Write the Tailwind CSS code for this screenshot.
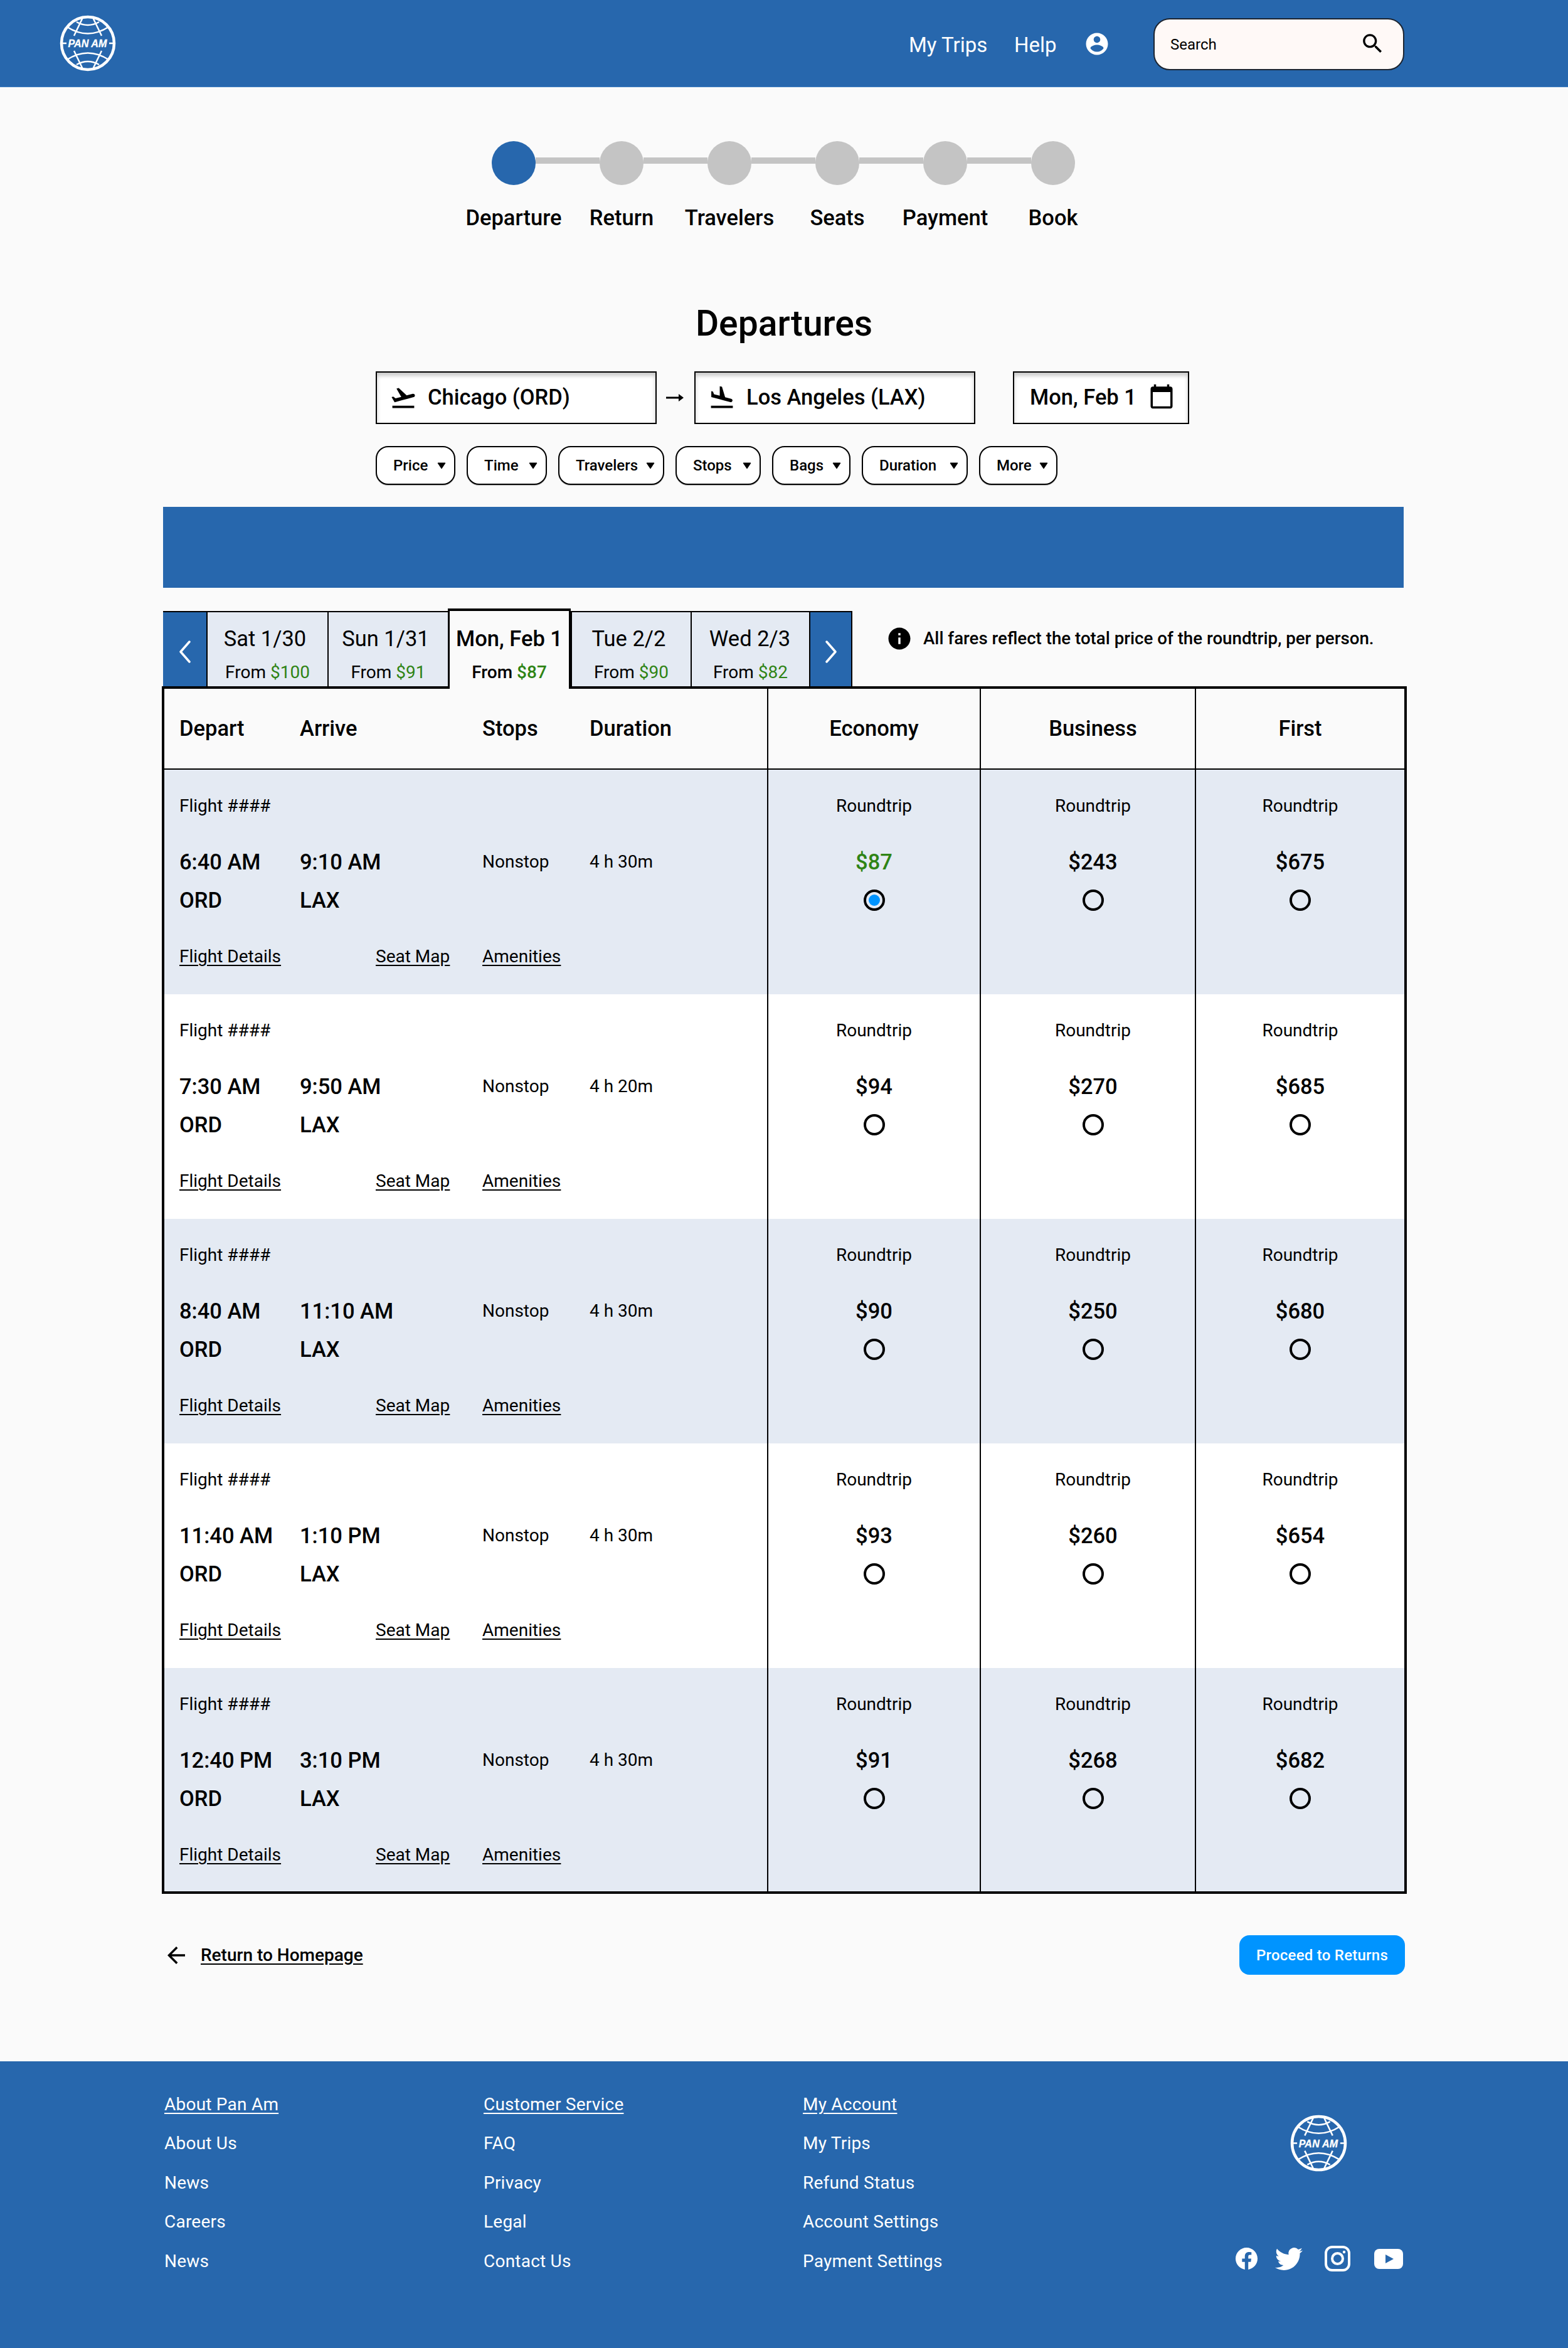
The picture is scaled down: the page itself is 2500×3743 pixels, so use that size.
<!DOCTYPE html>
<html lang="en">
<head>
    <meta charset="UTF-8">
    <title>Pan Am - Departures</title>
    <script src="https://cdn.jsdelivr.net/npm/@tailwindcss/browser@4"></script>
</head>
<body class="bg-[#fafafa] text-black [font-family:Roboto,sans-serif]">
    <!-- header -->
    <header class="h-[139px] bg-[#2767ad] border-b border-[#3f7fc4] flex items-center pl-[95px] pr-[261px] text-white">
        <svg class="logo w-[90px] h-[90px]" viewBox="0 0 90 90"></svg>
        <nav class="ml-auto flex items-center text-[33px]">
            <a class="w-[168px] pt-[6px]">My Trips</a>
            <a class="w-[111px] pt-[6px]">Help</a>
            <svg class="w-[42px] h-[42px] mt-[2px]" viewBox="0 0 24 24" fill="currentColor"><path d="M12 2C6.48 2 2 6.48 2 12s4.48 10 10 10 10-4.48 10-10S17.52 2 12 2zm0 3c1.66 0 3 1.34 3 3s-1.34 3-3 3-3-1.34-3-3 1.34-3 3-3zm0 14.2c-2.5 0-4.71-1.28-6-3.22.03-1.99 4-3.08 6-3.08 1.99 0 5.97 1.09 6 3.08-1.29 1.94-3.5 3.22-6 3.22z"/></svg>
        </nav>
        <div class="ml-[69px] mt-[2px] w-[400px] h-[83px] rounded-[26px] bg-[#fff9f7] border-2 border-[#1c2430] flex items-center pl-[25px] pr-[28px] text-black">
            <span class="text-[24px] mt-[1px]">Search</span>
            <svg class="ml-auto w-[41px] h-[41px] -mt-[2px]" viewBox="0 0 24 24" fill="currentColor"><path d="M15.5 14h-.79l-.28-.27C15.41 12.59 16 11.11 16 9.5 16 5.91 13.09 3 9.5 3S3 5.91 3 9.5 5.91 16 9.5 16c1.61 0 3.09-.59 4.23-1.57l.27.28v.79l5 4.99L20.49 19l-4.99-5zm-6 0C7.01 14 5 11.99 5 9.5S7.01 5 9.5 5 14 7.01 14 9.5 11.99 14 9.5 14z"/></svg>
        </div>
    </header>

    <main class="px-[260px]">
        <!-- stepper -->
        <div class="pt-[86px] flex flex-col items-center">
            <div class="flex items-start -ml-[2px]">
                <div class="w-[70px] h-[70px] rounded-full bg-[#2767ad]"></div>
                <div class="w-[102px] h-[10px] mt-[26px] bg-[#c4c4c4]"></div>
                <div class="w-[70px] h-[70px] rounded-full bg-[#c4c4c4]"></div>
                <div class="w-[102px] h-[10px] mt-[26px] bg-[#c4c4c4]"></div>
                <div class="w-[70px] h-[70px] rounded-full bg-[#c4c4c4]"></div>
                <div class="w-[102px] h-[10px] mt-[26px] bg-[#c4c4c4]"></div>
                <div class="w-[70px] h-[70px] rounded-full bg-[#c4c4c4]"></div>
                <div class="w-[102px] h-[10px] mt-[26px] bg-[#c4c4c4]"></div>
                <div class="w-[70px] h-[70px] rounded-full bg-[#c4c4c4]"></div>
                <div class="w-[102px] h-[10px] mt-[26px] bg-[#c4c4c4]"></div>
                <div class="w-[70px] h-[70px] rounded-full bg-[#c4c4c4]"></div>
            </div>
            <div class="mt-[32px] -ml-[2px] flex text-[34.5px] leading-[40px] font-medium text-center">
                <span class="w-[172px]">Departure</span>
                <span class="w-[172px]">Return</span>
                <span class="w-[172px]">Travelers</span>
                <span class="w-[172px]">Seats</span>
                <span class="w-[172px]">Payment</span>
                <span class="w-[172px]">Book</span>
            </div>
        </div>

        <h1 class="mt-[117px] text-center text-[57px] leading-[64px] font-medium">Departures</h1>

        <!-- search fields -->
        <div class="mt-[44px] ml-[339px] flex items-center text-[34.5px] font-medium">
            <div class="w-[448px] h-[84px] bg-white border-2 border-black shadow-[inset_0_5px_6px_rgba(0,0,0,0.22)] flex items-center pl-[20px]">
                <svg class="w-[44px] h-[44px]" viewBox="0 0 24 24" fill="currentColor"><path d="M2.5 19h19v2h-19zm19.57-9.36c-.21-.8-1.04-1.28-1.84-1.06L14.92 10l-6.9-6.43-1.93.51 4.14 7.17-4.97 1.33-1.97-1.54-1.45.39 1.82 3.16.77 1.33 1.6-.43 5.31-1.42 4.35-1.16L21 11.49c.81-.23 1.28-1.05 1.07-1.85z"/></svg>
                <span class="ml-[17px]">Chicago (ORD)</span>
            </div>
            <svg class="w-[60px] h-[20px]" viewBox="0 0 60 20" fill="currentColor"><path d="M15 8.5h20V4l8 6-8 6v-4.500H15z"/></svg>
            <div class="w-[448px] h-[84px] bg-white border-2 border-black shadow-[inset_0_5px_6px_rgba(0,0,0,0.22)] flex items-center pl-[20px]">
                <svg class="w-[44px] h-[44px]" viewBox="0 0 24 24" fill="currentColor"><path d="M2.5 19h19v2h-19zm7.18-5.730l4.350 1.160 5.310 1.420c.8.210 1.620-.260 1.840-1.060.210-.8-.260-1.620-1.060-1.840l-5.310-1.420-2.760-9.020L10.120 2v8.280L5.150 8.950l-.930-2.320-1.450-.390v5.170l1.600.430 5.310 1.430z"/></svg>
                <span class="ml-[17px]">Los Angeles (LAX)</span>
            </div>
            <div class="ml-[60px] w-[281px] h-[84px] bg-white border-2 border-black shadow-[inset_0_5px_6px_rgba(0,0,0,0.22)] flex items-center pl-[25px]">
                <span>Mon, Feb 1</span>
                <svg class="ml-[19px] w-[42px] h-[42px] -mt-[4px]" viewBox="0 0 24 24" fill="currentColor"><path d="M20 3h-1V1h-2v2H7V1H5v2H4c-1.100 0-2 .9-2 2v16c0 1.100.9 2 2 2h16c1.100 0 2-.9 2-2V5c0-1.100-.9-2-2-2zm0 18H4V8h16v13z"/></svg>
            </div>
        </div>

        <!-- filters -->
        <div id="filters" class="mt-[35px] ml-[339px] flex gap-[18px] text-[24px] font-medium"></div>

        <!-- promo bar -->
        <div class="mt-[35px] mr-[2px] h-[129px] bg-[#2767ad]"></div>

        <!-- date tabs -->
        <div class="mt-[33px] h-[124px] flex items-start">
            <div class="mt-[4px] w-[69px] h-[120px] bg-[#2767ad] border-t-2 border-black flex items-center justify-center">
                <svg class="w-[20px] h-[36px] mt-[8px]" viewBox="0 0 20 36" fill="none" stroke="white" stroke-width="3.500" stroke-linecap="round" stroke-linejoin="round"><path d="M17 2 3 18l14 16"/></svg>
            </div>
            <div id="tabs" class="flex items-start"></div>
            <div class="mt-[4px] w-[69px] h-[120px] bg-[#2767ad] border-t-2 border-r-2 border-l-2 border-black flex items-center justify-center">
                <svg class="w-[20px] h-[36px] mt-[8px]" viewBox="0 0 20 36" fill="none" stroke="white" stroke-width="3.500" stroke-linecap="round" stroke-linejoin="round"><path d="M3 2l14 16L3 34"/></svg>
            </div>
            <div class="ml-[54px] mt-[27px] flex items-center gap-[17px] text-[27.7px] leading-[40px] font-medium">
                <svg class="w-[42px] h-[42px]" viewBox="0 0 24 24" fill="currentColor"><path d="M12 2C6.480 2 2 6.480 2 12s4.480 10 10 10 10-4.480 10-10S17.520 2 12 2zm1 15h-2v-6h2v6zm0-8h-2V7h2v2z"/></svg>
                <span>All fares reflect the total price of the roundtrip, per person.</span>
            </div>
        </div>

        <!-- flights table -->
        <div class="-ml-[2px] -mr-[3px] border-[4px] border-black">
            <div class="grid grid-cols-[961px_339px_343px_1fr] h-[129px] border-b-2 border-black text-[34.5px] font-medium">
                <div class="grid grid-cols-[192px_291px_171px_1fr] items-center pl-[24px]">
                    <span>Depart</span><span>Arrive</span><span>Stops</span><span>Duration</span>
                </div>
                <div class="border-l-2 border-black flex items-center justify-center">Economy</div>
                <div class="border-l-2 border-black flex items-center justify-center pl-[16px]">Business</div>
                <div class="border-l-2 border-black flex items-center justify-center">First</div>
            </div>
            <div id="rows"></div>
        </div>

        <!-- bottom actions -->
        <div class="mt-[66px] flex items-center justify-between">
            <a class="flex items-center gap-[18px] text-[28px] font-medium">
                <svg class="w-[42px] h-[42px]" viewBox="0 0 24 24" fill="currentColor"><path d="M20 11H7.830l5.590-5.590L12 4l-8 8 8 8 1.410-1.410L7.830 13H20v-2z"/></svg>
                <span class="underline underline-offset-4">Return to Homepage</span>
            </a>
            <button class="w-[264px] h-[63px] rounded-[16px] bg-[#0094ff] text-white text-[24px] tracking-[0.01em] font-medium">Proceed to Returns</button>
        </div>
    </main>

    <!-- footer -->
    <footer class="mt-[138px] h-[459px] bg-[#2767ad] text-white flex pl-[262px] pt-[38px] text-[28px] tracking-[0.008em]">
        <div class="w-[509px]">
            <div class="h-[62.400px] leading-[62px] underline underline-offset-4">About Pan Am</div>
            <div class="h-[62.400px] leading-[62px]">About Us</div>
            <div class="h-[62.400px] leading-[62px]">News</div>
            <div class="h-[62.400px] leading-[62px]">Careers</div>
            <div class="h-[62.400px] leading-[62px]">News</div>
        </div>
        <div class="w-[509px]">
            <div class="h-[62.400px] leading-[62px] underline underline-offset-4">Customer Service</div>
            <div class="h-[62.400px] leading-[62px]">FAQ</div>
            <div class="h-[62.400px] leading-[62px]">Privacy</div>
            <div class="h-[62.400px] leading-[62px]">Legal</div>
            <div class="h-[62.400px] leading-[62px]">Contact Us</div>
        </div>
        <div class="w-[509px]">
            <div class="h-[62.400px] leading-[62px] underline underline-offset-4">My Account</div>
            <div class="h-[62.400px] leading-[62px]">My Trips</div>
            <div class="h-[62.400px] leading-[62px]">Refund Status</div>
            <div class="h-[62.400px] leading-[62px]">Account Settings</div>
            <div class="h-[62.400px] leading-[62px]">Payment Settings</div>
        </div>
        <div class="w-[450px]">
            <svg class="logo ml-[268px] mt-[47px] w-[91px] h-[91px]" viewBox="0 0 90 90"></svg>
            <div class="mt-[118px] ml-[181px] flex items-center h-[41px]">
                <svg class="w-[35px] h-[35px]" viewBox="0 0 24 24" fill="currentColor"><path d="M24 12.073c0-6.627-5.373-12-12-12s-12 5.373-12 12c0 5.990 4.388 10.954 10.125 11.854v-8.385H7.078v-3.470h3.047V9.430c0-3.007 1.792-4.669 4.533-4.669 1.312 0 2.686.235 2.686.235v2.953H15.830c-1.491 0-1.956.925-1.956 1.874v2.250h3.328l-.532 3.470h-2.796v8.385C19.612 23.027 24 18.062 24 12.073z"/></svg>
                <svg class="ml-[28px] w-[44px] h-[44px]" viewBox="0 0 24 24" fill="currentColor"><path d="M23.953 4.570a10 10 0 01-2.825.775 4.958 4.958 0 002.163-2.723c-.951.555-2.005.959-3.127 1.184a4.920 4.920 0 00-8.384 4.482C7.690 8.095 4.067 6.130 1.640 3.162a4.822 4.822 0 00-.666 2.475c0 1.710.870 3.213 2.188 4.096a4.904 4.904 0 01-2.228-.616v.060a4.923 4.923 0 003.946 4.827 4.996 4.996 0 01-2.212.085 4.936 4.936 0 004.604 3.417 9.867 9.867 0 01-6.102 2.105c-.390 0-.779-.023-1.170-.067a13.995 13.995 0 007.557 2.209c9.053 0 13.998-7.496 13.998-13.985 0-.210 0-.420-.015-.630A9.935 9.935 0 0024 4.590z"/></svg>
                <svg class="ml-[35px] w-[41px] h-[41px]" viewBox="0 0 41 41" fill="none" stroke="currentColor" stroke-width="4"><rect x="2" y="2" width="37" height="37" rx="10"/><circle cx="20.500" cy="20.500" r="8.500"/><circle cx="31" cy="10" r="2.200" fill="currentColor" stroke="none"/></svg>
                <svg class="ml-[38px] w-[46px] h-[32px]" viewBox="0 0 46 32"><rect width="46" height="32" rx="8" fill="white"/><path d="M18 9l13 7-13 7z" fill="#2767ad"/></svg>
            </div>
        </div>
    </footer>

    <script>
        // globe logo, used in the header and the footer
        const logo = `
            <g fill="none" stroke="white" stroke-width="2.500">
                <circle cx="45" cy="45" r="42" stroke-width="4.500"/>
                <path d="M12 19Q45 40 78 19M27 11Q45 21 63 11M37 4 23 33M53 4l14 29"/>
                <path d="M12 71Q45 50 78 71M27 79Q45 69 63 79M37 86 23 57M53 86 67 57"/>
                <path d="M5 45h6M79 45h6"/>
            </g>
            <text x="44.500" y="51" text-anchor="middle" textLength="62" lengthAdjust="spacingAndGlyphs" fill="white" stroke="white" stroke-width="0.300" font-family="Liberation Sans, sans-serif" font-weight="700" font-style="italic" font-size="16">PAN AM</text>`;
        document.querySelectorAll('.logo').forEach(el => { el.innerHTML = logo; });

        const filters = [['Price', 127], ['Time', 128], ['Travelers', 169], ['Stops', 136], ['Bags', 125], ['Duration', 169], ['More', 125]];
        document.getElementById('filters').innerHTML = filters.map(([name, width]) => `
            <div class="h-[62px] rounded-[20px] bg-white border-2 border-black shadow-[0_1px_1px_rgba(0,0,0,0.3)] flex items-center justify-between pl-[26px] pr-[13px]" style="width:${width}px">
                <span>${name}</span>
                <svg class="w-[14px] h-[12px]" viewBox="0 0 14 12" fill="currentColor"><path d="M1 2h12L7 11z" stroke="currentColor" stroke-linejoin="round"/></svg>
            </div>`).join('');

        // date, lowest fare, tab width, nudge of the date to the left
        const tabs = [['Sat 1/30', '$100', 193, 8], ['Sun 1/31', '$91', 192, 8], ['Mon, Feb 1', '$87', 196, 0], ['Tue 2/2', '$90', 191, 8], ['Wed 2/3', '$82', 189, 2]];
        document.getElementById('tabs').innerHTML = tabs.map(([date, price, width, nudge], i) => i === 2 ? `
            <div class="relative z-10 h-[128px] bg-[#fafafa] border-x-[3px] border-t-[4px] border-black flex flex-col items-center pt-[24px] font-medium" style="width:${width}px">
                <div class="text-[34.5px] leading-[40px] whitespace-nowrap">${date}</div>
                <div class="mt-[16px] text-[28px] leading-[36px]">From <span class="text-[#2f8415]">${price}</span></div>
            </div>` : `
            <div class="mt-[4px] h-[120px] bg-[#e4eaf3] border-t-2 border-l-2 border-black flex flex-col items-center pt-[22px]" style="width:${width}px">
                <div class="text-[34.5px] leading-[40px] whitespace-nowrap" style="padding-right:${nudge}px">${date}</div>
                <div class="mt-[16px] text-[28px] leading-[36px]">From <span class="text-[#2f8415]">${price}</span></div>
            </div>`).join('');

        const flights = [
            ['6:40 AM', '9:10 AM', '4 h 30m', '$87', '$243', '$675'],
            ['7:30 AM', '9:50 AM', '4 h 20m', '$94', '$270', '$685'],
            ['8:40 AM', '11:10 AM', '4 h 30m', '$90', '$250', '$680'],
            ['11:40 AM', '1:10 PM', '4 h 30m', '$93', '$260', '$654'],
            ['12:40 PM', '3:10 PM', '4 h 30m', '$91', '$268', '$682'],
        ];

        function fareCell(price, extra, selected) {
            return `
                <div class="border-l-2 border-black flex flex-col items-center pt-[38px] ${extra}">
                    <div class="h-[40px] leading-[40px] text-[28px]">Roundtrip</div>
                    <div class="mt-[49px] h-[40px] leading-[40px] text-[34.5px] font-medium ${selected ? 'text-[#2f8415]' : ''}">${price}</div>
                    <div class="mt-[24px] w-[34px] h-[34px] rounded-full border-[4px] border-black flex items-center justify-center">
                        ${selected ? '<div class="w-[18px] h-[18px] rounded-full bg-[#0094ff]"></div>' : ''}
                    </div>
                </div>`;
        }

        document.getElementById('rows').innerHTML = flights.map(([dep, arr, dur, eco, bus, first], i) => `
            <div class="grid grid-cols-[961px_339px_343px_1fr] ${i === 4 ? 'h-[356px]' : 'h-[358px]'} ${i % 2 === 0 ? 'bg-[#e4eaf3]' : 'bg-white'}">
                <div class="pl-[24px] pt-[38px] text-[28px] leading-[40px]">
                    <div class="h-[40px]">Flight ####</div>
                    <div class="mt-[49px] grid grid-cols-[192px_291px_171px_1fr] h-[40px] items-center">
                        <span class="text-[34.5px] font-medium">${dep}</span>
                        <span class="text-[34.5px] font-medium">${arr}</span>
                        <span>Nonstop</span>
                        <span>${dur}</span>
                    </div>
                    <div class="mt-[21px] grid grid-cols-[192px_1fr] h-[40px] items-center text-[34.5px] font-medium">
                        <span>ORD</span><span>LAX</span>
                    </div>
                    <div class="mt-[50px] flex h-[40px] items-center underline underline-offset-4">
                        <a class="w-[313px]">Flight Details</a>
                        <a class="w-[170px]">Seat Map</a>
                        <a>Amenities</a>
                    </div>
                </div>
                ${fareCell(eco, '', i === 0)}
                ${fareCell(bus, 'pl-[16px]', false)}
                ${fareCell(first, '', false)}
            </div>`).join('');
    </script>
</body>
</html>
